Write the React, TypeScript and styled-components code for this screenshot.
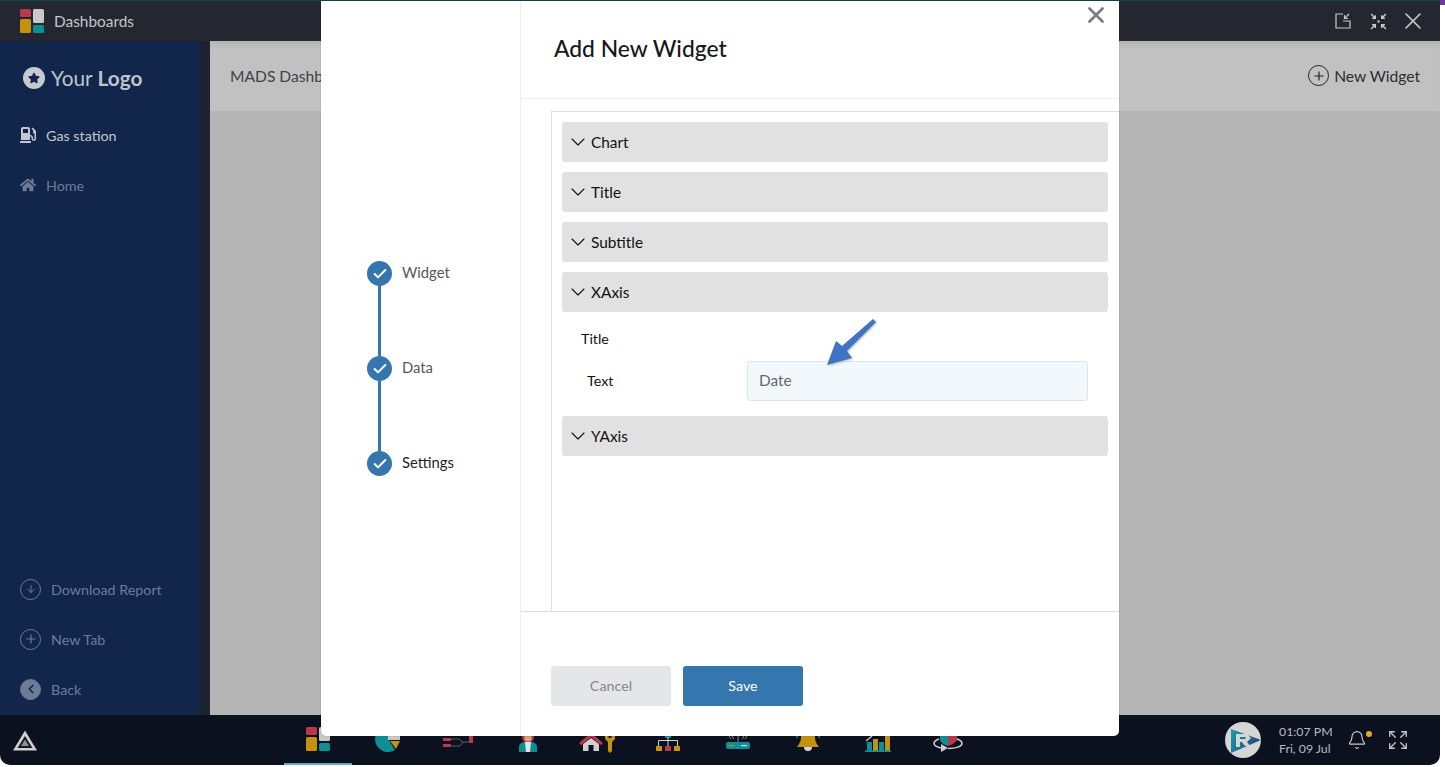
import React from 'react';
import styled, { createGlobalStyle } from 'styled-components';
import { ChevronDown, Check, X, Plus, ArrowDown, ChevronLeft, Bell, Expand } from 'lucide-react';
import { FaGasPump, FaHome, FaStar } from 'react-icons/fa';

const GlobalStyle = createGlobalStyle`
  html, body {
    margin: 0;
    padding: 0;
    background: #fff;
    font-family: "Lato", "Noto Sans", sans-serif;
  }
  * { box-sizing: border-box; }
`;

const Page = styled.div`
  position: relative;
  width: 1445px;
  height: 767px;
  overflow: hidden;
  background: #fff;
`;

const CornerMark = styled.span`
  position: absolute;
  top: 0;
  right: 0;
  width: 5px;
  height: 5px;
  background: #6a3a9c;
`;

const Shell = styled.div`
  width: 1440px;
  height: 765px;
  display: flex;
  flex-direction: column;
  border-radius: 0 0 10px 10px;
  overflow: hidden;
`;

const TitleBar = styled.div`
  height: 41px;
  flex: none;
  display: flex;
  align-items: center;
  padding: 0 13px 0 20px;
  background: #24272f;
  border-top: 1px solid #0a4a4e;
`;

const AppTitle = styled.span`
  margin-left: 10px;
  font-size: 15.4px;
  color: #c4c5c8;
`;

const WinControls = styled.div`
  margin-left: auto;
  display: flex;
  align-items: center;
  gap: 12px;
  color: #c9cacc;

  svg:first-child {
    margin-right: 7px;
  }
`;

const Body = styled.div`
  flex: 1;
  min-height: 0;
  display: flex;
`;

const Sidebar = styled.aside`
  width: 200px;
  flex: none;
  display: flex;
  flex-direction: column;
  background: #12264b;
`;

const Brand = styled.div`
  height: 70px;
  display: flex;
  align-items: center;
  padding: 3px 0 0 23px;
  color: #bfc3cb;
  font-size: 20.8px;
`;

const BrandBadge = styled.span`
  width: 22px;
  height: 22px;
  margin-right: 6px;
  border-radius: 50%;
  background: #c6c9cf;
  color: #12264b;
  display: flex;
  align-items: center;
  justify-content: center;
`;

const NavList = styled.nav<{ $bottom?: boolean }>`
  display: flex;
  flex-direction: column;
  ${(p) => (p.$bottom ? 'margin-top: auto;' : '')}
`;

const NavItem = styled.div<{ $active?: boolean }>`
  height: 50px;
  display: flex;
  align-items: center;
  gap: 10px;
  padding: 0 0 2px 20px;
  font-size: 14.3px;
  color: ${(p) => (p.$active ? '#c3c7d0' : '#6f7b95')};
`;

const CircleIcon = styled.span<{ $filled?: boolean }>`
  width: 21px;
  height: 21px;
  border-radius: 50%;
  display: flex;
  align-items: center;
  justify-content: center;
  border: 1px solid #6f7b95;
  background: ${(p) => (p.$filled ? '#6f7b95' : 'transparent')};
  color: ${(p) => (p.$filled ? '#12264b' : '#6f7b95')};
`;

const Gutter = styled.div`
  width: 10px;
  flex: none;
  background: #1e2330;
`;

const Main = styled.main`
  flex: 1;
  display: flex;
  flex-direction: column;
  background: #b5b5b5;
`;

const MainHeader = styled.header`
  height: 70px;
  display: flex;
  align-items: center;
  justify-content: space-between;
  padding: 0 20px 1px;
  background: #c1c1c1;
  box-shadow: inset 0 7px 7px -5px rgba(0, 0, 0, 0.1);
  color: #3f4145;
  font-size: 15.6px;
`;

const AddWidget = styled.div`
  display: flex;
  align-items: center;
  gap: 5px;
  color: #2c2e32;
`;

const AddCircle = styled.span`
  width: 21px;
  height: 21px;
  border-radius: 50%;
  border: 1.6px solid #1f2125;
  color: #1f2125;
  display: flex;
  align-items: center;
  justify-content: center;
`;

const Taskbar = styled.footer`
  height: 50px;
  flex: none;
  display: flex;
  align-items: center;
  background: #0c111f;
`;

const TaskStart = styled.div`
  width: 284px;
  padding-left: 13px;
  display: flex;
  align-items: center;
`;

const TaskTabs = styled.div`
  display: flex;
  gap: 2px;
`;

const TaskTab = styled.div<{ $active?: boolean }>`
  width: 68px;
  height: 50px;
  flex: none;
  display: flex;
  align-items: center;
  justify-content: center;
  ${(p) => (p.$active ? 'border-bottom: 2px solid #5fa8cf;' : '')}
`;

const Tray = styled.div`
  margin-left: auto;
  display: flex;
  align-items: center;
  padding-right: 31px;
  color: #c9cacc;
`;

const Clock = styled.div`
  margin-left: 18px;
  width: 58px;
  font-size: 12.3px;
  line-height: 17px;
  white-space: nowrap;
  color: #b9bbc0;
`;

const BellWrap = styled.span`
  position: relative;
  margin: 0 20px 0 10px;
  display: flex;
`;

const BellDot = styled.span`
  position: absolute;
  top: 1px;
  right: -5px;
  width: 6px;
  height: 6px;
  border-radius: 50%;
  background: #e0a92b;
`;

const Modal = styled.section`
  position: absolute;
  left: 321px;
  top: 1px;
  width: 798px;
  height: 735px;
  display: flex;
  background: #fff;
  border-radius: 0 0 5px 5px;
  box-shadow: 0 0 1px rgba(0, 0, 0, 0.5);
`;

const StepColumn = styled.div`
  width: 200px;
  flex: none;
  display: flex;
  flex-direction: column;
  padding: 260px 0 0 46px;
  border-right: 1px solid #efefef;
`;

const Step = styled.div<{ $last?: boolean }>`
  display: flex;
  gap: 10px;
  height: ${(p) => (p.$last ? '25px' : '95px')};
`;

const StepRail = styled.div`
  width: 25px;
  display: flex;
  flex-direction: column;
  align-items: center;
`;

const StepDot = styled.span`
  width: 25px;
  height: 25px;
  flex: none;
  border-radius: 50%;
  background: #3476ad;
  color: #fff;
  display: flex;
  align-items: center;
  justify-content: center;
`;

const StepLine = styled.span`
  width: 3px;
  flex: 1;
  background: #3476ad;
`;

const StepLabel = styled.span<{ $current?: boolean }>`
  font-size: 14.8px;
  line-height: 22px;
  color: ${(p) => (p.$current ? '#1f1f1f' : '#55565b')};
`;

const Content = styled.div`
  flex: 1;
  min-width: 0;
  display: flex;
  flex-direction: column;
`;

const ModalHeader = styled.div`
  height: 98px;
  flex: none;
  display: flex;
  padding: 32px 0 0 33px;
  border-bottom: 1px solid #f0f0f0;
`;

const ModalTitle = styled.h2`
  margin: 0;
  font-size: 22.8px;
  line-height: 30px;
  font-weight: 500;
  color: #17181a;
`;

const CloseButton = styled.span`
  position: absolute;
  top: 1px;
  right: 10px;
  color: #7d7d7d;
  display: flex;
`;

const SettingsPanel = styled.div`
  height: 500px;
  flex: none;
  margin: 12px 0 0 30px;
  padding: 10px 11px 0 10px;
  display: flex;
  flex-direction: column;
  gap: 10px;
  border-left: 1px solid #dedede;
  border-top: 1px solid #dedede;
`;

const AccordionHead = styled.div`
  height: 40px;
  flex: none;
  display: flex;
  align-items: center;
  gap: 1px;
  padding-left: 4px;
  background: #e1e1e1;
  border-radius: 3px;
  font-size: 15.4px;
  color: #111;
`;

const AccordionBody = styled.div`
  height: 94px;
  margin-top: -10px;
  flex: none;
  display: flex;
  flex-direction: column;
  font-size: 14.3px;
  color: #111;
`;

const GroupLabel = styled.div`
  height: 49px;
  padding: 18px 0 0 19px;
`;

const FieldRow = styled.div`
  display: flex;
  align-items: center;
  padding-left: 25px;
`;

const FieldLabel = styled.span`
  width: 160px;
  padding-bottom: 2px;
`;

const TextField = styled.div`
  position: relative;
  width: 341px;
  height: 40px;
  display: flex;
  align-items: center;
  padding: 0 0 2px 11px;
  background: #f2f9fd;
  border: 1px solid #dfe3e6;
  border-radius: 3px;
  font-size: 15.4px;
  color: #62656a;
`;

const Pointer = styled.svg`
  position: absolute;
  left: 77px;
  top: -44px;
  filter: drop-shadow(1px 1px 1px rgba(0, 0, 0, 0.25));
`;

const ModalFooter = styled.div`
  flex: 1;
  display: flex;
  gap: 12px;
  padding: 54px 0 0 30px;
  border-top: 1px solid #dedede;
`;

const ActionButton = styled.button<{ $primary?: boolean }>`
  width: 120px;
  height: 40px;
  border: none;
  border-radius: 3px;
  padding: 0 0 2px;
  font-family: inherit;
  font-size: 14.3px;
  background: ${(p) => (p.$primary ? '#3476ad' : '#e5e6e8')};
  color: ${(p) => (p.$primary ? '#fff' : '#85878a')};
`;

const DashboardGlyph = () => (
  <svg width="24" height="24" viewBox="0 0 24 24">
    <rect x="0" y="0" width="11" height="8" rx="1.5" fill="#b8384e" />
    <rect x="0" y="10" width="11" height="14" rx="1.5" fill="#c4920f" />
    <rect x="13" y="0" width="11" height="14" rx="1.5" fill="#c8c8c8" />
    <rect x="13" y="16" width="11" height="8" rx="1.5" fill="#0e8f95" />
  </svg>
);

const taskIcons = [
  // pie chart
  <svg key="pie" width="26" height="30" viewBox="0 0 26 30">
    <path d="M13 1A13 13 0 1 0 20 25L13 14z" fill="#0e8f95" />
    <path d="M13 10h12v5H13z" fill="#c8c8c8" />
    <path d="M15 16H25L21 24z" fill="#c4920f" />
  </svg>,
  // flow
  <svg key="flow" width="30" height="24" viewBox="0 0 30 24">
    <rect x="0" y="10" width="8" height="3" fill="#b8384e" />
    <rect x="0" y="16" width="8" height="3" fill="#b8384e" />
    <path d="M8 11h8l4 3h6M8 18h9l3-4" stroke="#555a66" fill="none" />
    <rect x="26" y="8" width="4" height="7" fill="#b8384e" />
  </svg>,
  // person
  <svg key="person" width="20" height="28" viewBox="0 0 20 28">
    <circle cx="10" cy="11" r="6" fill="#b8384e" />
    <circle cx="10" cy="12" r="3.6" fill="#d9a177" />
    <path d="M1 26v-5c0-3 3-5 6-5h6c3 0 6 2 6 5v5z" fill="#0e8f95" />
    <path d="M7 16h6l-1 10H8z" fill="#e4e4e4" />
  </svg>,
  // home and key
  <svg key="home" width="38" height="28" viewBox="0 0 38 28">
    <path d="M0 17 12 7l12 10-2 2-10-8-10 8z" fill="#b8384e" />
    <path d="M4 18l8-6 8 6v7h-5.5v-6h-5v6H4z" fill="#cfcfcf" />
    <path d="M26 8h10v5l-3 3v9l-2 2-2-2v-9l-3-3z" fill="#c4920f" />
    <rect x="29.5" y="9" width="3" height="3" fill="#0c111f" />
  </svg>,
  // org chart
  <svg key="org" width="26" height="26" viewBox="0 0 26 26">
    <rect x="10" y="8" width="6" height="3" fill="#0e8f95" />
    <path d="M13 10v9M3.500 19v-5.500h19V19" stroke="#d0d0d0" fill="none" />
    <rect x="1" y="19" width="6" height="5" fill="#c4920f" />
    <rect x="10" y="19" width="6" height="5" fill="#b8384e" />
    <rect x="19" y="19" width="6" height="5" fill="#c4920f" />
  </svg>,
  // router
  <svg key="router" width="26" height="24" viewBox="0 0 26 24">
    <path d="M13 4v10M9 11a5 5 0 0 1-2-4M17 11a5 5 0 0 0 2-4M6 11a8 8 0 0 1-2-4M20 11a8 8 0 0 0 2-4" stroke="#8b8f96" fill="none" />
    <rect x="1" y="14" width="24" height="7" rx="2" fill="#0e8f95" />
    <rect x="4" y="17" width="5" height="1.2" fill="#c4920f" />
    <rect x="16" y="17" width="6" height="1.2" fill="#d0d0d0" />
  </svg>,
  // bell
  <svg key="bell" width="24" height="28" viewBox="0 0 24 28">
    <path d="M12 2c5 0 7 4 7 9 0 5 2 7 4 10H1c2-3 4-5 4-10 0-5 2-9 7-9z" fill="#c4920f" />
    <path d="M8 21h8a4 4 0 0 1-8 0z" fill="#d8d8d8" />
    <path d="M1 9v3M23 9v3" stroke="#0e8f95" strokeWidth="1.5" />
  </svg>,
  // bar chart
  <svg key="bars" width="26" height="28" viewBox="0 0 26 28">
    <path d="M1 15l6-5" stroke="#d0d0d0" strokeWidth="1.2" />
    <rect x="2" y="16" width="5" height="9" fill="#0e8f95" />
    <rect x="8" y="13" width="5" height="12" fill="#c4920f" />
    <rect x="14" y="16" width="5" height="9" fill="#0e8f95" />
    <rect x="20" y="10" width="5" height="15" fill="#c4920f" />
    <rect x="0" y="24.5" width="26" height="1.5" fill="#0e8f95" />
  </svg>,
  // rotate
  <svg key="rotate" width="30" height="24" viewBox="0 0 30 24">
    <path d="M7 8h8v10c-4-1-7-3-8-6z" fill="#0e8f95" />
    <path d="M15 8h9v4c-2 3-5 5-9 6z" fill="#b8384e" />
    <path d="M6 11C3 12 1 14 1 15.500c0 2 3 3.500 7 4.500M24 11c3 1 5 3 5 4.500 0 3-6 5-14 5" stroke="#cfcfcf" strokeWidth="1.5" fill="none" />
    <path d="M8 16l7 4-7 4z" fill="#cfcfcf" />
  </svg>,
];

const steps = ['Widget', 'Data', 'Settings'];

const App: React.FC = () => {
  return (
    <Page>
      <GlobalStyle />
      <CornerMark />
      <Shell>
        <TitleBar>
          <DashboardGlyph />
          <AppTitle>Dashboards</AppTitle>
          <WinControls>
            <svg width="16" height="16" viewBox="0 0 16 16" fill="none" stroke="currentColor" strokeWidth="1.2">
              <path d="M8 1H1v14h14V8H8M14 1 9.500 5.500M9.500 2v3.500H13" />
            </svg>
            <svg width="17" height="17" viewBox="0 0 16 16" fill="none" stroke="currentColor" strokeWidth="1.3">
              <path d="M1 1l4 4M5 2v3H2M15 1l-4 4M11 2v3h3M1 15l4-4M5 14v-3H2M15 15l-4-4M11 14v-3h3" />
              <rect x="7" y="7" width="2" height="2" fill="currentColor" stroke="none" />
            </svg>
            <X size={28} strokeWidth={1.4} />
          </WinControls>
        </TitleBar>
        <Body>
          <Sidebar>
            <Brand>
              <BrandBadge>
                <FaStar size={12} />
              </BrandBadge>
              Your&nbsp;<b>Logo</b>
            </Brand>
            <NavList>
              <NavItem $active>
                <FaGasPump size={16} />
                Gas station
              </NavItem>
              <NavItem>
                <FaHome size={16} />
                Home
              </NavItem>
            </NavList>
            <NavList $bottom>
              <NavItem>
                <CircleIcon>
                  <ArrowDown size={12} />
                </CircleIcon>
                Download Report
              </NavItem>
              <NavItem>
                <CircleIcon>
                  <Plus size={14} />
                </CircleIcon>
                New Tab
              </NavItem>
              <NavItem>
                <CircleIcon $filled>
                  <ChevronLeft size={14} strokeWidth={3} />
                </CircleIcon>
                Back
              </NavItem>
            </NavList>
          </Sidebar>
          <Gutter />
          <Main>
            <MainHeader>
              <span>MADS Dashboard</span>
              <AddWidget>
                <AddCircle>
                  <Plus size={14} />
                </AddCircle>
                New Widget
              </AddWidget>
            </MainHeader>
          </Main>
        </Body>
        <Taskbar>
          <TaskStart>
            <svg width="24" height="21" viewBox="0 0 24 20">
              <path d="M12 0 24 20H0z" fill="#d0d0d0" />
              <path d="M12 5.500 19.500 17.500H4.500z" fill="#15181f" />
              <path d="M12 9 16 15.500H8z" fill="#8d8f94" />
            </svg>
          </TaskStart>
          <TaskTabs>
            <TaskTab $active>
              <DashboardGlyph />
            </TaskTab>
            {taskIcons.map((icon, i) => (
              <TaskTab key={i}>{icon}</TaskTab>
            ))}
          </TaskTabs>
          <Tray>
            <svg width="36" height="36" viewBox="0 0 36 36">
              <defs>
                <linearGradient id="trayLogo" x1="0" y1="0" x2="1" y2="0.4">
                  <stop offset="0" stopColor="#1f9aa6" />
                  <stop offset="1" stopColor="#1f4a7c" />
                </linearGradient>
              </defs>
              <circle cx="18" cy="18" r="18" fill="#d5d5d5" />
              <path d="M6 7 36 18 6 31z" fill="url(#trayLogo)" />
              <path d="M11 12h11l4 4-4 4 3 4h-5l-3-4h-2v5h-4zM15 15v2h5l1-1-1-1z" fill="#d5d5d5" fillRule="evenodd" />
            </svg>
            <Clock>
              01:07 PM
              <br />
              Fri, 09 Jul
            </Clock>
            <BellWrap>
              <Bell size={20} strokeWidth={1.4} />
              <BellDot />
            </BellWrap>
            <Expand size={22} strokeWidth={1.4} />
          </Tray>
        </Taskbar>
      </Shell>
      <Modal>
        <StepColumn>
          {steps.map((label, i) => (
            <Step key={label} $last={i === steps.length - 1}>
              <StepRail>
                <StepDot>
                  <Check size={16} strokeWidth={3} />
                </StepDot>
                {i < steps.length - 1 && <StepLine />}
              </StepRail>
              <StepLabel $current={i === steps.length - 1}>{label}</StepLabel>
            </Step>
          ))}
        </StepColumn>
        <Content>
          <ModalHeader>
            <ModalTitle>Add New Widget</ModalTitle>
          </ModalHeader>
          <CloseButton>
            <X size={26} strokeWidth={2.6} />
          </CloseButton>
          <SettingsPanel>
            {['Chart', 'Title', 'Subtitle', 'XAxis'].map((label) => (
              <AccordionHead key={label}>
                <ChevronDown size={24} strokeWidth={1.1} />
                {label}
              </AccordionHead>
            ))}
            <AccordionBody>
              <GroupLabel>Title</GroupLabel>
              <FieldRow>
                <FieldLabel>Text</FieldLabel>
                <TextField>
                  Date
                  <Pointer width="54" height="50" viewBox="0 0 54 50">
                    <path d="M48 1 51 4 22 33 27 40 2 47 11 23 17 28z" fill="#3f74c4" />
                  </Pointer>
                </TextField>
              </FieldRow>
            </AccordionBody>
            <AccordionHead>
              <ChevronDown size={24} strokeWidth={1.1} />
              YAxis
            </AccordionHead>
          </SettingsPanel>
          <ModalFooter>
            <ActionButton>Cancel</ActionButton>
            <ActionButton $primary>Save</ActionButton>
          </ModalFooter>
        </Content>
      </Modal>
    </Page>
  );
};

export default App;
